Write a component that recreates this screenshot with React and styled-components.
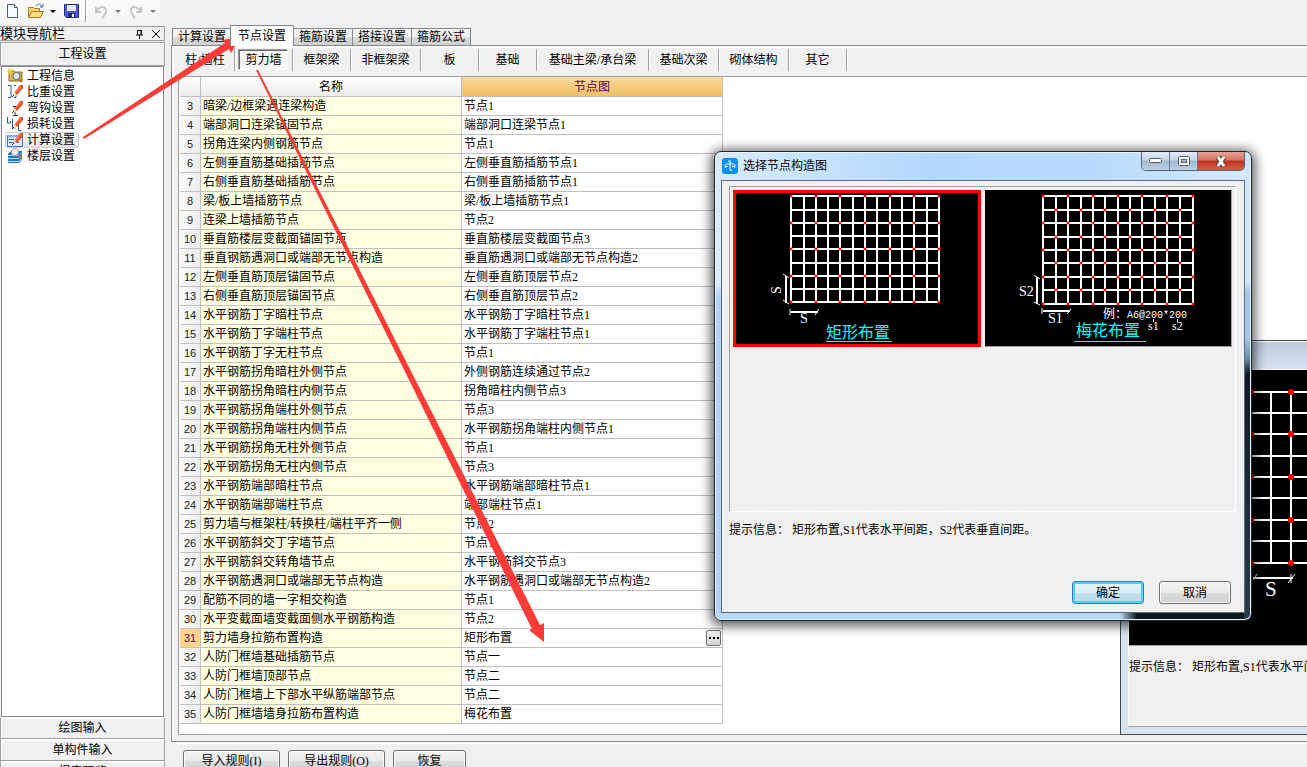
import React from "react";
import styled, { createGlobalStyle, css } from "styled-components";

const GlobalStyle = createGlobalStyle`
  *, *::before, *::after { box-sizing: border-box; }
  body { margin: 0; background: #f0f0f0; overflow: hidden; }
  body, button {
    font-family: "Liberation Serif", "Noto Sans CJK SC", serif;
    font-size: 12px;
    line-height: 16px;
    color: #000;
  }
  button { padding: 0; margin: 0; border: 0; background: none; white-space: nowrap; }
`;

const Desktop = styled.div`
  position: relative;
  display: flex;
  flex-direction: column;
  height: 100vh;
  overflow: hidden;
`;

/* Top tool bar */
const Toolbar = styled.header`
  display: flex;
  align-items: center;
  align-self: flex-start;
  flex: none;
  height: 25px;
  width: 160px;
  padding: 0 4px 3px 5px;
  background: linear-gradient(#fbfbfb, #f3f3f3);
`;
const ToolButton = styled.button`
  display: flex;
  width: ${(p) => p.$w || 16}px;
  height: 16px;
  margin-right: ${(p) => p.$gap || 0}px;
`;
const Caret = styled.button`
  width: 6px;
  height: 16px;
  display: flex;
  align-items: center;
  margin-right: ${(p) => p.$gap || 0}px;
  &::after {
    content: "";
    border: 3px solid transparent;
    border-top-color: ${(p) => (p.$dim ? "#7c7c7c" : "#000")};
    border-bottom: 0;
  }
`;
const ToolDivider = styled.span`
  width: 2px;
  height: 22px;
  margin-right: 7px;
  border-left: 1px solid #a0a0a0;
  border-right: 1px solid #fff;
`;

const Body = styled.div`
  display: flex;
  flex: 1;
  min-height: 0;
`;

/* Navigation panel; its last section runs past the bottom of the window */
const Sidebar = styled.nav`
  display: flex;
  flex-direction: column;
  flex: none;
  width: 165px;
  margin: 1px 0 -16px;
  overflow: hidden;
`;
const SideTitle = styled.div`
  display: flex;
  align-items: center;
  flex: none;
  height: 15px;
  margin-bottom: 1px;
  border: 1px solid #a0a0a0;
  border-left: 0;
  padding-right: 2px;
  background: #f0f0f0;
`;
const SideTitleText = styled.span`
  flex: 1;
  font-size: 13px;
`;
const SideIconButton = styled.button`
  display: flex;
  margin-left: 6px;
`;
const SideSection = styled.button`
  flex: none;
  height: ${(p) => (p.$open ? 24 : 22)}px;
  border: 1px solid #a0a0a0;
  border-top-color: ${(p) => (p.$open ? "#a0a0a0" : "#fff")};
  box-shadow: inset 1px 1px #fff;
`;
const SideList = styled.ul`
  flex: 1;
  min-height: 0;
  margin: 0 1px;
  padding: 1px 3px;
  list-style: none;
  background: #fff;
  border: 1px solid #828790;
`;
const SideItem = styled.button`
  display: flex;
  align-items: center;
  gap: 4px;
  height: 16px;
  padding: 0 3px 0 1px;
  border: 1px solid ${(p) => (p.$selected ? "#d0d0d0" : "transparent")};
  border-radius: 3px;
  background: ${(p) => (p.$selected ? "linear-gradient(#fafafa, #e6e6e6)" : "none")};
`;

/* Work area */
const Main = styled.main`
  display: flex;
  flex-direction: column;
  flex: 1;
  min-width: 0;
  padding-left: 6px;
`;
const Tabs = styled.div`
  display: flex;
  align-items: flex-end;
  flex: none;
  height: 20px;
  padding-left: 1px;
`;
const Tab = styled.button`
  position: relative;
  width: ${(p) => (p.$active ? 64 : 60)}px;
  height: 17px;
  margin-right: ${(p) => (p.$active ? 0 : -1)}px;
  border: 1px solid #828790;
  border-bottom: 0;
  background: linear-gradient(#f3f3f3 50%, #dcdcdc 50%, #d0d0d0);
  ${(p) =>
    p.$active &&
    css`
      z-index: 1;
      height: 21px;
      margin: 0 -1px -1px -1px;
      background: #fff;
    `}
`;
const Panel = styled.section`
  display: flex;
  flex-direction: column;
  flex: 1;
  min-height: 0;
  padding: 2px 0 6px 2px;
  border: 1px solid #828790;
  border-right: 0;
  box-shadow: inset 2px 2px #fff;
  background: #f0f0f0;
`;
const SubBar = styled.div`
  display: flex;
  flex: none;
  height: 28px;
  padding: 1px 0 0 2px;
`;
const SubItem = styled.div`
  display: flex;
  align-items: center;
  justify-content: center;
  flex: none;
  width: ${(p) => p.$w}px;
  height: 22px;
  border-right: 1px solid #a0a0a0;
  box-shadow: 1px 0 #fff;
`;
const SubButton = styled.button`
  height: 20px;
  padding: 0 5px;
  ${(p) =>
    p.$pressed &&
    css`
      border: 1px solid #fff;
      border-top-color: #696969;
      border-left-color: #696969;
      box-shadow: -1px -1px #a0a0a0;
      background: repeating-conic-gradient(#fff 0 25%, #efefef 0 50%) 0 0 / 2px 2px;
    `}
`;
const GridFrame = styled.div`
  flex: 1;
  min-height: 0;
  margin-left: 4px;
  padding-left: 1px;
  overflow: hidden;
  background: #fff;
  border: 1px solid #a0a0a0;
  border-right: 0;
`;
const Grid = styled.table`
  width: 543px;
  table-layout: fixed;
  border-collapse: separate;
  border-spacing: 0;
`;
const cell = css`
  height: 19px;
  padding: 0 2px;
  font-weight: normal;
  line-height: 16px;
  white-space: nowrap;
  border-right: 1px solid #c0c0c0;
  border-bottom: 1px solid #c0c0c0;
`;
const HeadCell = styled.th`
  ${cell}
  height: 20px;
  width: ${(p) => p.$w}px;
  color: ${(p) => (p.$selected ? "#5a0050" : "#000")};
  background: ${(p) =>
    p.$selected ? "linear-gradient(#f9d99f, #f2bf61)" : "linear-gradient(#fff, #ececec)"};
`;
const NumberCell = styled.th`
  ${cell}
  padding: 0;
  font-family: "Liberation Sans", sans-serif;
  font-size: 11px;
  text-align: center;
  color: ${(p) => (p.$selected ? "#5a0050" : "#222")};
  background: ${(p) => (p.$selected ? "#ffd58d" : "linear-gradient(90deg, #fafafa, #ececec)")};
`;
const NameCell = styled.td`
  ${cell}
  background: #ffffe1;
`;
const ValueCell = styled.td`
  ${cell}
  background: #fff;
`;
const ValueLine = styled.div`
  display: flex;
  justify-content: space-between;
  align-items: center;
  height: 16px;
`;
const MoreButton = styled.button`
  display: flex;
  align-items: center;
  justify-content: center;
  gap: 2px;
  width: 15px;
  height: 16px;
  margin-right: -1px;
  border: 1px solid #707070;
  border-radius: 2px;
  background: linear-gradient(#f4f4f4, #d2d2d2);
`;
const MoreDot = styled.i`
  width: 2px;
  height: 2px;
  background: #000;
`;
const Footer = styled.footer`
  display: flex;
  flex: none;
  gap: 8px;
  height: 25px;
  padding: 6px 0 0 12px;
  overflow: hidden;
  border-top: 2px solid #fff;
`;
const buttonFace = css`
  border: 1px solid #707070;
  border-radius: 3px;
  box-shadow: inset 0 0 0 1px #fcfcfc;
  background: linear-gradient(#f2f2f2, #ebebeb 50%, #dddddd 50%, #cfcfcf);
`;
const FooterButton = styled.button`
  ${buttonFace}
  flex: none;
  width: ${(p) => p.$w}px;
  height: 22px;
`;

/* Floating windows */
const Dialog = styled.section`
  position: absolute;
  left: 714px;
  top: 151px;
  width: 538px;
  height: 470px;
  display: flex;
  flex-direction: column;
  padding: 1px 6px 7px;
  border: 1px solid #1d2630;
  border-radius: 7px;
  box-shadow: inset 0 0 0 1px #e9f5ff, 0 2px 12px 3px rgba(0, 0, 0, 0.65);
  background:
    linear-gradient(#cfe5fb 0 130px, #a3c8ee 140px 185px, #6f93b8 205px, #101a24 222px, #2c3b4b) right / 7px 100% no-repeat,
    linear-gradient(90deg, #b5d8fb 0 405px, #10161c 422px) bottom / 100% 7px no-repeat,
    linear-gradient(#d9ecff 0 130px, #aed1f5 145px) left / 7px 100% no-repeat,
    linear-gradient(90deg, #d8ebff, #b4d8fc 40%, #b9dafc 70%, #d5e9fd);
`;
const DialogTitle = styled.header`
  display: flex;
  flex: none;
  height: 27px;
  padding: 5px 0 0 1px;
`;
const DialogName = styled.h1`
  flex: 1;
  margin: 0 0 0 5px;
  font-size: 12px;
  line-height: 16px;
  font-weight: normal;
`;
const Caption = styled.div`
  display: flex;
  height: 19px;
  margin-top: -6px;
  border: 1px solid #566675;
  border-top: 0;
  border-radius: 0 0 5px 5px;
  overflow: hidden;
`;
const CaptionButton = styled.button`
  display: flex;
  align-items: center;
  justify-content: center;
  width: ${(p) => (p.$close ? 46 : 28)}px;
  border-right: ${(p) => (p.$close ? 0 : "1px solid #66788a")};
  background: ${(p) =>
    p.$close
      ? "linear-gradient(#e6a698, #d4715f 45%, #bb3220 50%, #cf6048)"
      : "linear-gradient(#e1ebf6, #c5d5e6 45%, #a3b8ce 50%, #bcd0e4)"};
`;
const Client = styled.div`
  display: flex;
  flex-direction: column;
  flex: 1;
  min-height: 0;
  padding: 5px 8px 8px 7px;
  border: 1px solid #5d6c7c;
  background: #f0f0f0;
`;
const Choices = styled.div`
  display: flex;
  gap: 4px;
  flex: none;
  height: 326px;
  padding: 3px;
  border: 1px solid #a0a0a0;
  border-right-color: #fff;
  border-bottom-color: #fff;
`;
const Choice = styled.button`
  flex: 1;
  min-width: 0;
  height: 157px;
  border-right: 1px solid #a0a0a0;
  border-bottom: 1px solid #a0a0a0;
  background: #000;
  overflow: hidden;
  outline: ${(p) => (p.$selected ? "3px solid #f00" : "none")};
  outline-offset: -3px;
`;
const Drawing = styled.svg`
  display: block;
`;
const Hint = styled.p`
  margin: ${(p) => p.$top}px 0 0;
  white-space: pre;
`;
const Actions = styled.div`
  display: flex;
  justify-content: flex-end;
  gap: 15px;
  margin-top: auto;
  padding-right: 5px;
`;
const ActionButton = styled.button`
  ${buttonFace}
  width: 72px;
  height: 23px;
  ${(p) =>
    p.$primary &&
    css`
      border-color: #3c7fb1;
      box-shadow: inset 0 0 0 2px #4cd0f5;
      background: linear-gradient(#eaf5fa, #d9eef6 50%, #c3e0ee 50%, #b8d9e9);
    `}
`;
const BackDialog = styled.section`
  position: absolute;
  left: 1120px;
  top: 340px;
  width: 420px;
  height: 395px;
  display: flex;
  flex-direction: column;
  padding: 28px 7px 7px;
  border: 1px solid #45484c;
  box-shadow: inset 0 1px #fff;
  background: linear-gradient(#bccada, #d7e3f1 28px, #d7e3f1);
`;
const BackClient = styled.div`
  flex: 1;
  border: 1px solid #f8f8f8;
  border-bottom-color: #a0a0a0;
  background: #f0f0f0;
`;
const BackCanvas = styled.div`
  height: 276px;
  background: #000;
  border-bottom: 1px solid #a0a0a0;
`;
const Marks = styled.svg`
  position: absolute;
  left: 0;
  top: 0;
  pointer-events: none;
`;

const TABS = ["计算设置", "节点设置", "箍筋设置", "搭接设置", "箍筋公式"];
const KINDS = [
  ["柱/墙柱", 59], ["剪力墙", 58], ["框架梁", 58], ["非框架梁", 70], ["板", 58],
  ["基础", 58], ["基础主梁/承台梁", 112], ["基础次梁", 70], ["砌体结构", 70], ["其它", 58],
];
const ROWS = [
  ["暗梁/边框梁遇连梁构造", "节点1"],
  ["端部洞口连梁锚固节点", "端部洞口连梁节点1"],
  ["拐角连梁内侧钢筋节点", "节点1"],
  ["左侧垂直筋基础插筋节点", "左侧垂直筋插筋节点1"],
  ["右侧垂直筋基础插筋节点", "右侧垂直筋插筋节点1"],
  ["梁/板上墙插筋节点", "梁/板上墙插筋节点1"],
  ["连梁上墙插筋节点", "节点2"],
  ["垂直筋楼层变截面锚固节点", "垂直筋楼层变截面节点3"],
  ["垂直钢筋遇洞口或端部无节点构造", "垂直筋遇洞口或端部无节点构造2"],
  ["左侧垂直筋顶层锚固节点", "左侧垂直筋顶层节点2"],
  ["右侧垂直筋顶层锚固节点", "右侧垂直筋顶层节点2"],
  ["水平钢筋丁字暗柱节点", "水平钢筋丁字暗柱节点1"],
  ["水平钢筋丁字端柱节点", "水平钢筋丁字端柱节点1"],
  ["水平钢筋丁字无柱节点", "节点1"],
  ["水平钢筋拐角暗柱外侧节点", "外侧钢筋连续通过节点2"],
  ["水平钢筋拐角暗柱内侧节点", "拐角暗柱内侧节点3"],
  ["水平钢筋拐角端柱外侧节点", "节点3"],
  ["水平钢筋拐角端柱内侧节点", "水平钢筋拐角端柱内侧节点1"],
  ["水平钢筋拐角无柱外侧节点", "节点1"],
  ["水平钢筋拐角无柱内侧节点", "节点3"],
  ["水平钢筋端部暗柱节点", "水平钢筋端部暗柱节点1"],
  ["水平钢筋端部端柱节点", "端部端柱节点1"],
  ["剪力墙与框架柱/转换柱/端柱平齐一侧", "节点2"],
  ["水平钢筋斜交丁字墙节点", "节点1"],
  ["水平钢筋斜交转角墙节点", "水平钢筋斜交节点3"],
  ["水平钢筋遇洞口或端部无节点构造", "水平钢筋遇洞口或端部无节点构造2"],
  ["配筋不同的墙一字相交构造", "节点1"],
  ["水平变截面墙变截面侧水平钢筋构造", "节点2"],
  ["剪力墙身拉筋布置构造", "矩形布置"],
  ["人防门框墙基础插筋节点", "节点一"],
  ["人防门框墙顶部节点", "节点二"],
  ["人防门框墙上下部水平纵筋端部节点", "节点二"],
  ["人防门框墙墙身拉筋布置构造", "梅花布置"],
];

const Pencil = () => (
  <>
    <path d="m7 9 6-8h3v3l-6 7z" fill="#ea4f27" />
    <path d="m8 9 6-7" stroke="#fba07c" />
    <path d="m7 8 3 3-4 2z" fill="#f6dfb8" />
    <path d="m5 13 2-2" stroke="#333" />
  </>
);
const SIDE = [
  ["工程信息", (
    <>
      <path d="M2 3h5l1 1h7v9H2z" fill="#dcb44e" stroke="#8d6b1c" />
      <path d="M3 0v7M0 3h7M1 1l5 5M6 1 1 6" stroke="#f5cf35" />
      <circle cx="9.5" cy="8" r="3.500" fill="#dceefa" stroke="#4f6b85" />
      <path d="m12 11 3 3" stroke="#c0722c" strokeWidth="2" />
    </>
  )],
  ["比重设置", (
    <>
      <path d="M1 1.500h3v12H1M7 1.500h2M9 8v5.500H7" fill="none" stroke="#2c5f9e" />
      <Pencil />
    </>
  )],
  ["弯钩设置", (
    <>
      <path d="M6 6.500h4M8 6v9M6 15.500h5" fill="none" stroke="#333" />
      <Pencil />
    </>
  )],
  ["损耗设置", (
    <>
      <path d="M.5 1v6h3V5M5.500 3v9h3M11.500 8v6.500h3" fill="none" stroke="#2c5f9e" />
      <Pencil />
    </>
  )],
  ["计算设置", (
    <>
      <path d="M.5 3.500h15v11H.5z" fill="#dcebfc" stroke="#3d74c0" />
      <path d="M1 4h14" stroke="#7db0ee" strokeWidth="2" />
      <path d="M2 7.500h5M2 10.500h10" stroke="#2b61ab" />
      <Pencil />
    </>
  )],
  ["楼层设置", (
    <>
      <path d="M1 6 4 3h11v9l-3 3H1z" fill="#2376bd" />
      <path d="M1 7.500h11l3-3M1 10.500h11l3-3M1 13.500h11l3-3" fill="none" stroke="#bfe2f8" />
      <circle cx="8" cy="4" r="3.500" fill="#eef4f8" stroke="#9a9fa5" />
      <path d="m11 7 4 3" stroke="#b5713c" strokeWidth="2" />
    </>
  )],
];

function TieGrid({ xs, ys, staggered }) {
  return (
    <>
      <path
        d={xs.map((x) => `M${x} ${ys[0] - 1}V${ys[ys.length - 1] + 1}`).join("") +
          ys.map((y) => `M${xs[0] - 1} ${y}H${xs[xs.length - 1] + 1}`).join("")}
        stroke="#fff" strokeWidth="2" fill="none" shapeRendering="crispEdges"
      />
      {ys.map((y, r) =>
        xs.map((x, c) => {
          const tied = staggered ? (r + c) % 2 === 0 : r % 2 === 0 && c % 2 === 0;
          return tied ? (
            <path key={`${r}-${c}`} d={`M${x - 1.5} ${y}h3M${x} ${y - 1.5}v3`} stroke="#f00" strokeWidth="1.500" />
          ) : null;
        })
      )}
    </>
  );
}

const SmallText = { fill: "#fff", fontFamily: '"Liberation Serif", "Noto Sans CJK SC", serif' };

function RectangularDrawing() {
  return (
    <Drawing width="248" height="156" viewBox="0 0 248 156">
      <TieGrid
        xs={[58, 71, 83, 95, 107, 120, 132, 144, 157, 169, 181, 194, 206]}
        ys={[6, 20, 33, 46, 59, 73, 86, 99, 112]}
      />
      <g stroke="#fff" fill="none">
        <path d="M53 86v27M58 122h27" strokeWidth="2" />
        <path d="m50 84 6 4M50 110l6 4M57 119v6M82 125l4-6" />
      </g>
      <text x="-104" y="48" transform="rotate(-90)" fontSize="14" {...SmallText}>S</text>
      <text x="67" y="133" fontSize="14" {...SmallText}>S</text>
      <text x="93" y="148" fontSize="16" {...SmallText} fill="#0ff">矩形布置</text>
      <path d="M93 151.500h66" stroke="#0ff" />
    </Drawing>
  );
}

function StaggeredDrawing() {
  return (
    <Drawing width="248" height="156" viewBox="0 0 248 156">
      <TieGrid
        staggered
        xs={[58, 71, 83, 96, 108, 120, 133, 145, 157, 170, 182, 195, 208]}
        ys={[6, 20, 33, 47, 60, 73, 87, 100, 114]}
      />
      <g stroke="#fff" fill="none">
        <path d="M52 87v27M58 121h27" strokeWidth="2" />
        <path d="m49 85 6 4M49 112l6 3M57 118v6M82 124l4-5" />
        <path d="M168.500 129v3M192.500 129v3" />
      </g>
      <text x="34" y="106" fontSize="14" {...SmallText}>S2</text>
      <text x="63" y="133" fontSize="14" {...SmallText}>S1</text>
      <text x="118" y="128" fontSize="12" {...SmallText}>例：</text>
      <text x="142" y="128" fontSize="10" {...SmallText} fontFamily='"Liberation Mono", monospace'>A6@200*200</text>
      <text x="163" y="140" fontSize="12" {...SmallText}>s1</text>
      <text x="187" y="140" fontSize="12" {...SmallText}>s2</text>
      <text x="91" y="146" fontSize="16" {...SmallText} fill="#0ff">梅花布置</text>
      <path d="M89 151.500h72" stroke="#0ff" />
    </Drawing>
  );
}

function BackDrawing() {
  const xs = [122, 142, 162, 182, 202];
  const ys = [22, 43, 64, 86, 107, 128, 150, 171, 193];
  return (
    <Drawing width="402" height="275" viewBox="0 0 402 275">
      <path
        d={xs.map((x) => `M${x} 21V194`).join("") + ys.map((y) => `M122 ${y}H402`).join("")}
        stroke="#fff" strokeWidth="2"
      />
      {xs.filter((_, i) => i % 2 === 0).map((x) =>
        ys.filter((_, i) => i % 2 === 0).map((y) => <circle key={`${x}-${y}`} cx={x} cy={y} r="3" fill="#f00" />)
      )}
      <path d="M124 208h40" stroke="#fff" strokeWidth="2" />
      <path d="m159 213 7-9M162 204v9M124 210l4-6" stroke="#fff" />
      <text x="136" y="226" fontSize="21" {...SmallText}>S</text>
    </Drawing>
  );
}

export default function App() {
  return (
    <>
      <GlobalStyle />
      <Desktop>
        <Toolbar>
          <ToolButton $gap={6} aria-label="新建">
            <svg width="16" height="16"><path d="M2.500 1.500h7l3 3v10h-10z" fill="#f7fbff" stroke="#47617e" /><path d="M9.500 1.500v3h3" fill="#c3d3e4" stroke="#47617e" /></svg>
          </ToolButton>
          <ToolButton $w={17} $gap={6} aria-label="打开">
            <svg width="17" height="16"><path d="M1.500 14.500v-10h5l1 1h5v3" fill="#f6d67c" stroke="#a67a22" /><path d="m1.500 14.500 3-6h12l-3 6z" fill="#ffdf82" stroke="#a67a22" /><path d="M9 3c2-3 5-2 6 1M16 1v3h-3" fill="none" stroke="#486c94" /></svg>
          </ToolButton>
          <Caret $gap={8} aria-label="打开列表" />
          <ToolButton $w={15} $gap={6} aria-label="保存">
            <svg width="15" height="16"><path d="M.5 1.500h14v13h-12l-2-2z" fill="#4d5bd0" stroke="#242c85" /><path d="M3 2h9v6H3z" fill="#dfe8f8" /><path d="M4 10h7v4H4z" fill="#26306f" /><path d="M8 11h2v3H8z" fill="#fff" /></svg>
          </ToolButton>
          <ToolDivider />
          <ToolButton $w={14} $gap={7} aria-label="撤销">
            <svg width="14" height="16"><path d="M2 4v5h5M3 8c2-5 9-5 9-1 0 3-1 5-4 8" fill="none" stroke="#c4c4c4" strokeWidth="2" /></svg>
          </ToolButton>
          <Caret $dim $gap={8} aria-label="撤销列表" />
          <ToolButton $w={14} $gap={7} aria-label="恢复">
            <svg width="14" height="16"><path d="M12 4v5H7M11 8C9 3 2 3 2 7c0 3 1 5 4 8" fill="none" stroke="#c4c4c4" strokeWidth="2" /></svg>
          </ToolButton>
          <Caret $dim aria-label="恢复列表" />
        </Toolbar>

        <Body>
          <Sidebar>
            <SideTitle>
              <SideTitleText>模块导航栏</SideTitleText>
              <SideIconButton aria-label="固定"><svg width="9" height="10"><path d="M2.500 5.500v-4h4v4M1 6h7M4.500 6v4M6 1v5" fill="none" stroke="#000" /></svg></SideIconButton>
              <SideIconButton aria-label="关闭"><svg width="12" height="10"><path d="m2 1 8 8M10 1 2 9" stroke="#000" /></svg></SideIconButton>
            </SideTitle>
            <SideSection $open>工程设置</SideSection>
            <SideList>
              {SIDE.map(([label, icon]) => (
                <li key={label}>
                  <SideItem $selected={label === "计算设置"}>
                    <svg width="16" height="16" viewBox="0 0 16 16">{icon}</svg>
                    {label}
                  </SideItem>
                </li>
              ))}
            </SideList>
            <SideSection>绘图输入</SideSection>
            <SideSection>单构件输入</SideSection>
            <SideSection>报表预览</SideSection>
          </Sidebar>

          <Main>
            <Tabs>
              {TABS.map((t) => <Tab key={t} $active={t === "节点设置"}>{t}</Tab>)}
            </Tabs>
            <Panel>
              <SubBar>
                {KINDS.map(([k, w]) => (
                  <SubItem key={k} $w={w}><SubButton $pressed={k === "剪力墙"}>{k}</SubButton></SubItem>
                ))}
              </SubBar>
              <GridFrame>
                <Grid>
                  <thead>
                    <tr>
                      <HeadCell $w={21} />
                      <HeadCell $w={261}>名称</HeadCell>
                      <HeadCell $w={261} $selected>节点图</HeadCell>
                    </tr>
                  </thead>
                  <tbody>
                    {ROWS.map(([name, value], i) => {
                      const n = i + 3;
                      return (
                        <tr key={n}>
                          <NumberCell scope="row" $selected={n === 31}>{n}</NumberCell>
                          <NameCell>{name}</NameCell>
                          <ValueCell>
                            <ValueLine>
                              {value}
                              {n === 31 && <MoreButton aria-label="选择节点"><MoreDot /><MoreDot /><MoreDot /></MoreButton>}
                            </ValueLine>
                          </ValueCell>
                        </tr>
                      );
                    })}
                  </tbody>
                </Grid>
              </GridFrame>
            </Panel>
            <Footer>
              <FooterButton $w={97}>导入规则(I)</FooterButton>
              <FooterButton $w={97}>导出规则(O)</FooterButton>
              <FooterButton $w={73}>恢复</FooterButton>
            </Footer>
          </Main>
        </Body>

        <BackDialog>
          <BackClient>
            <BackCanvas><BackDrawing /></BackCanvas>
            <Hint $top={13}>提示信息： 矩形布置,S1代表水平间距，S2代表垂直间距。</Hint>
          </BackClient>
        </BackDialog>

        <Dialog role="dialog" aria-label="选择节点构造图">
          <DialogTitle>
            <svg width="16" height="16"><rect width="16" height="16" rx="3" fill="#0d8ff2" /><path d="M8 3v9M4 10c-2-2-1-4 1-4h6c2 0 3 2 1 4M6 3.500c1-1 3-1 3 1M8 12.500h2M3 8.500h3M10 8.500h3" fill="none" stroke="#fff" /></svg>
            <DialogName>选择节点构造图</DialogName>
            <Caption>
              <CaptionButton aria-label="最小化"><svg width="13" height="6"><rect x=".5" y=".5" width="12" height="4" rx="1" fill="#fff" stroke="#525c68" /></svg></CaptionButton>
              <CaptionButton aria-label="最大化"><svg width="12" height="10"><rect x=".5" y=".5" width="11" height="9" rx="1" fill="#fff" stroke="#525c68" /><rect x="3.500" y="3.500" width="5" height="3" fill="#a9bdd2" stroke="#525c68" /></svg></CaptionButton>
              <CaptionButton $close aria-label="关闭"><svg width="12" height="11"><path d="m3 1 6 9M9 1 3 10" stroke="#5c3a3a" strokeWidth="5" /><path d="m3 1 6 9M9 1 3 10" stroke="#fff" strokeWidth="3" /></svg></CaptionButton>
            </Caption>
          </DialogTitle>
          <Client>
            <Choices>
              <Choice $selected aria-label="矩形布置"><RectangularDrawing /></Choice>
              <Choice aria-label="梅花布置"><StaggeredDrawing /></Choice>
            </Choices>
            <Hint $top={10}>提示信息： 矩形布置,S1代表水平间距，S2代表垂直间距。</Hint>
            <Actions>
              <ActionButton $primary>确定</ActionButton>
              <ActionButton>取消</ActionButton>
            </Actions>
          </Client>
        </Dialog>

        <Marks width="560" height="660" aria-hidden="true">
          <path d="M83 137 225 43l-2-3 18-3-10 16-2-4L84 139z" fill="#fb3b37" />
          <path d="M256 70h2l282 555 4-2v19l-15-12 3-1z" fill="#fb3b37" />
        </Marks>
      </Desktop>
    </>
  );
}
